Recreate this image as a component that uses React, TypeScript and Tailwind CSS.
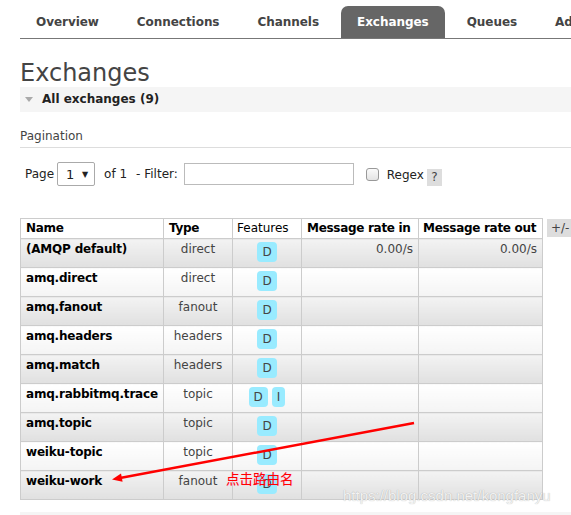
const tabs = ["Overview", "Connections", "Channels", "Exchanges", "Queues", "Admin"];

const exchanges = [
  { name: "(AMQP default)", type: "direct", features: ["D"], rateIn: "0.00/s", rateOut: "0.00/s" },
  { name: "amq.direct", type: "direct", features: ["D"] },
  { name: "amq.fanout", type: "fanout", features: ["D"] },
  { name: "amq.headers", type: "headers", features: ["D"] },
  { name: "amq.match", type: "headers", features: ["D"] },
  { name: "amq.rabbitmq.trace", type: "topic", features: ["D", "I"] },
  { name: "amq.topic", type: "topic", features: ["D"] },
  { name: "weiku-topic", type: "topic", features: ["D"] },
  { name: "weiku-work", type: "fanout", features: ["D"] },
];

export default function App() {
  return (
    <div className="relative h-[515px] w-[571px] overflow-hidden bg-white font-['DejaVu_Sans',Verdana,sans-serif] text-[12px] leading-[15px] text-[#444]">
      {/* nav tabs */}
      <nav className="ml-5 flex gap-[6px] whitespace-nowrap border-b border-[#777] pt-[6px]">
        {tabs.map((tab) => (
          <div
            key={tab}
            className={
              tab === "Exchanges"
                ? "flex h-8 shrink-0 items-center rounded-t-[7px] bg-[#666] px-4 font-bold tracking-[-0.05px] text-white"
                : "flex h-8 shrink-0 items-center px-4 font-bold tracking-[-0.05px] text-[#444]"
            }
          >
            {tab}
          </div>
        ))}
      </nav>

      <h1 className="ml-5 mt-[20px] text-[24px] leading-[28px] text-[#444]">Exchanges</h1>

      <div className="ml-5 flex h-[25px] items-center bg-[#f5f5f5] pl-1">
        <span className="mr-[9px] ml-[1px] h-0 w-0 border-x-[4px] border-t-[5px] border-x-transparent border-t-[#aaa]" />
        <h2 className="font-bold text-[#222]">All exchanges (9)</h2>
      </div>

      <p className="ml-5 mt-[17px] border-b border-[#ddd] pb-[3px] text-[#444]">Pagination</p>

      <div className="ml-5 mt-[14px] flex h-6 items-center pl-[5px] text-[#222]">
        <span>Page</span>
        <div className="ml-[3px] flex h-6 w-[38px] items-center justify-between rounded-[2px] border border-[#aaa] bg-white pl-2 pr-[6px]">
          <span className="text-[13px]">1</span>
          <span className="text-[8px]">▼</span>
        </div>
        <span className="ml-[9px]">of 1</span>
        <span className="ml-[9px]">- Filter:</span>
        <div className="ml-[6px] h-[22px] w-[170px] border border-[#bbb] bg-white" />
        <span className="ml-[12px] h-[13px] w-[13px] rounded-[3px] border border-[#999] bg-linear-to-b from-[#fafafa] to-[#e4e4e4]" />
        <span className="ml-[8px] mt-[2px]">Regex</span>
        <span className="ml-[3px] mt-[6px] flex h-[17px] w-[15px] items-center justify-center bg-[#ddd] text-[#444]">?</span>
      </div>

      <div className="ml-5 mt-[32px] flex items-start">
        <table className="w-[522px] table-fixed border-collapse">
          <colgroup>
            <col className="w-[143px]" />
            <col className="w-[69px]" />
            <col className="w-[69px]" />
            <col className="w-[117px]" />
            <col className="w-[124px]" />
          </colgroup>
          <thead>
            <tr className="h-[20px] whitespace-nowrap bg-white text-left text-[#000]">
              <th className="border border-[#ccc] px-[5px] py-0 font-bold tracking-[-0.3px]">Name</th>
              <th className="border border-[#ccc] px-[5px] py-0 font-bold tracking-[-0.3px]">Type</th>
              <th className="border border-[#ccc] px-[4px] py-0 font-normal">Features</th>
              <th className="border border-[#ccc] px-[5px] py-0 font-bold tracking-[-0.3px]">Message rate in</th>
              <th className="border border-[#ccc] px-[4px] py-0 font-bold tracking-[-0.3px]">Message rate out</th>
            </tr>
          </thead>
          <tbody>
            {exchanges.map((ex, i) => {
              const bg =
                i % 2 === 0
                  ? "bg-linear-to-b from-[#f3f3f3] to-[#e0e0e0]"
                  : "bg-linear-to-b from-[#ffffff] to-[#f4f4f4]";
              const cell = `border border-[#ccc] px-[5px] pt-[3px] align-top ${bg}`;
              return (
                <tr key={ex.name} className="h-[29px]">
                  <td className={`${cell} whitespace-nowrap font-bold tracking-[-0.2px] text-[#000]`}>{ex.name}</td>
                  <td className={`${cell} text-center text-[#444]`}>{ex.type}</td>
                  <td className={`${cell} text-center`}>
                    <div className="flex justify-center gap-1">
                      {ex.features.map((f) => (
                        <span
                          key={f}
                          className="flex h-5 items-center rounded-[4px] bg-[#99ebff] px-[5px] text-[#444]"
                        >
                          {f}
                        </span>
                      ))}
                    </div>
                  </td>
                  <td className={`${cell} text-right text-[#444]`}>{ex.rateIn ?? ""}</td>
                  <td className={`${cell} text-right text-[#444]`}>{ex.rateOut ?? ""}</td>
                </tr>
              );
            })}
          </tbody>
        </table>
        <span className="ml-[4px] mt-[1px] flex h-[18px] shrink-0 items-center bg-[#ddd] px-[4px] text-[#444]">
          +/-
        </span>
      </div>

      <div className="ml-5 mt-[12px] h-[25px] bg-[#f5f5f5]" />

      {/* annotation overlay */}
      <svg className="pointer-events-none absolute inset-0" width="571" height="515" viewBox="0 0 571 515">
        <line x1="414" y1="423" x2="120" y2="478" stroke="#ff0000" strokeWidth="2.5" />
        <polygon points="112,479.5 122.6,481.8 121,473.6" fill="#ff0000" />
      </svg>
      <span className="absolute left-[226px] top-[471px] font-['Noto_Sans_CJK_SC',sans-serif] text-[13.5px] leading-[15px] text-[#ff0000] [text-shadow:0_0_1px_#ff9ad5]">
        点击路由名
      </span>
      <span className="absolute left-[343px] top-[487px] font-['Liberation_Sans',Arial,sans-serif] text-[15px] leading-[17px] text-[#f2f2f2] [text-shadow:0_0_1px_rgba(0,0,0,0.3)]">
        https://blog.csdn.net/kongfanyu
      </span>
    </div>
  );
}
